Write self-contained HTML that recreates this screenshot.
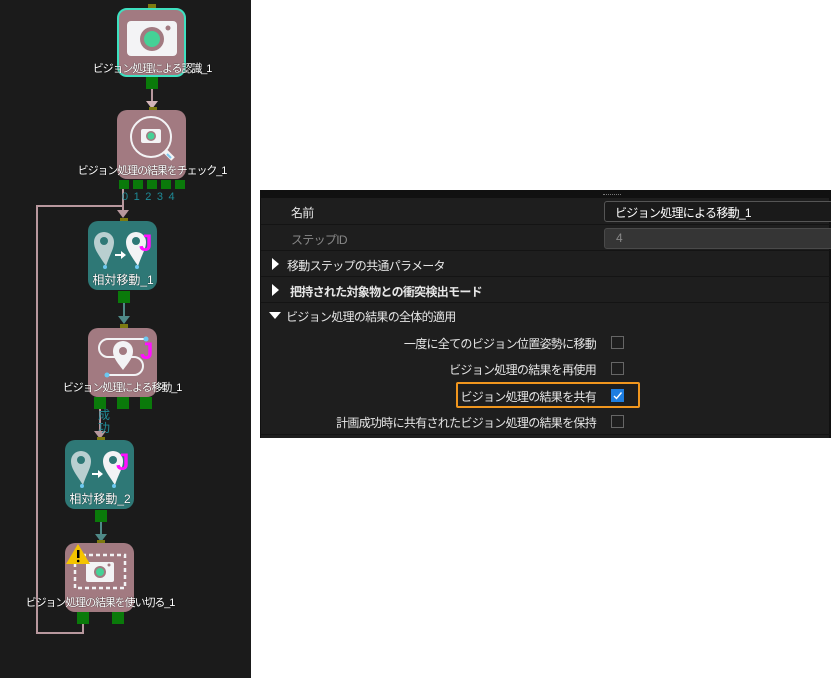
<!DOCTYPE html>
<html><head><meta charset="utf-8"><style>
*{margin:0;padding:0;box-sizing:border-box}
body{width:831px;height:678px;background:#fff;position:relative;overflow:hidden;font-family:"Liberation Sans","Noto Sans CJK JP",sans-serif}
.a{position:absolute}
#left{left:0;top:0;width:251px;height:678px;background:#1b1b1b}
.node{position:absolute;width:69px;height:69px;border-radius:10px}
.pk{background:#a27a81}.tl{background:#2e7876}
.lbl{position:absolute;white-space:nowrap;color:#fff;font-size:11px;text-align:center;transform:translateX(-50%);line-height:12px;text-shadow:0 0 1px #000;letter-spacing:-1.1px}
.port{position:absolute;width:12px;height:12px;background:#0a7a0a}
.in{position:absolute;width:8px;height:8px;background:#7d7a10}
.ln{position:absolute;background:#b8989e}
#panel{left:260px;top:190px;width:571px;height:248px;background:#1e1e1e;border-left:1px solid #111;border-right:2px solid #111}
.row{position:absolute;left:0;width:569px;border-bottom:1px solid #141414}
.t{position:absolute;color:#e6e6e6;font-size:12px;white-space:nowrap;letter-spacing:-0.7px}
.cb{position:absolute;left:350px;width:13px;height:13px;border:1px solid #666;background:#1e1e1e}
</style></head><body>
<div id="left" class="a">
<div class="ln" style="left:36px;top:205px;width:2px;height:429px"></div>
<div class="ln" style="left:36px;top:205px;width:88px;height:2px"></div>
<div class="ln" style="left:122px;top:189px;width:2px;height:18px"></div>
<div class="ln" style="left:36px;top:632px;width:48px;height:2px"></div>
<div class="ln" style="left:82px;top:622px;width:2px;height:12px"></div>
<div class="ln" style="left:151px;top:89px;width:2px;height:14px"></div>
<svg class="a" style="left:146px;top:101px" width="12" height="9"><path d="M0 0H12L6 8Z" fill="#d4b4b9"/></svg>
<div class="ln" style="left:122px;top:207px;width:2px;height:7px"></div>
<svg class="a" style="left:117px;top:210px" width="12" height="9"><path d="M0 0H12L6 8Z" fill="#b8989e"/></svg>
<div class="a" style="left:123px;top:303px;width:2px;height:14px;background:#4f8a88"></div>
<svg class="a" style="left:118px;top:316px" width="12" height="9"><path d="M0 0H12L6 8Z" fill="#4f8a88"/></svg>
<div class="ln" style="left:99px;top:409px;width:2px;height:25px"></div>
<svg class="a" style="left:94px;top:431px" width="12" height="9"><path d="M0 0H12L6 8Z" fill="#b8989e"/></svg>
<div class="a" style="left:100px;top:521px;width:2px;height:14px;background:#4f8a88"></div>
<svg class="a" style="left:95px;top:534px" width="12" height="9"><path d="M0 0H12L6 8Z" fill="#4f8a88"/></svg>

<div class="in" style="left:148px;top:4px"></div>
<div class="node pk" style="left:117px;top:8px;border:2px solid #3ee0c0"></div>
<svg class="a" style="left:127px;top:21px" width="50" height="36"><rect x="0" y="0" width="50" height="35" rx="4" fill="#f3f3f5"/><circle cx="25" cy="18" r="12" fill="#a27a81"/><circle cx="25" cy="18" r="8" fill="#45d196"/><circle cx="41" cy="7" r="2.5" fill="#a27a81"/></svg>
<div class="lbl" style="left:152px;top:63px">ビジョン処理による認識_1</div>
<div class="port" style="left:146px;top:77px"></div>
<div class="in" style="left:149px;top:107px"></div>
<div class="node pk" style="left:117px;top:110px"></div>
<svg class="a" style="left:128px;top:114px" width="52" height="50"><circle cx="23" cy="23" r="20" fill="none" stroke="#f3f3f5" stroke-width="2"/><rect x="13" y="15" width="20" height="14" rx="2" fill="#f3f3f5"/><circle cx="23" cy="22" r="5" fill="#a27a81"/><circle cx="23" cy="22" r="3.5" fill="#45d196"/><path d="M37 37L45 45" stroke="#f3f3f5" stroke-width="5"/><path d="M39 40L43 44" stroke="#7ec8ee" stroke-width="2"/></svg>
<div class="lbl" style="left:152px;top:165px">ビジョン処理の結果をチェック_1</div>
<div class="port" style="left:119px;top:180px;height:9px;width:10px"></div>
<div class="port" style="left:133px;top:180px;height:9px;width:10px"></div>
<div class="port" style="left:147px;top:180px;height:9px;width:10px"></div>
<div class="port" style="left:161px;top:180px;height:9px;width:10px"></div>
<div class="port" style="left:175px;top:180px;height:9px;width:10px"></div>
<div class="a" style="left:122px;top:191px;color:#1f8a96;font-size:11px;letter-spacing:5.5px">01234</div>
<div class="in" style="left:120px;top:218px"></div>
<div class="node tl" style="left:88px;top:221px"></div>
<svg class="a" style="left:94px;top:230px" width="62" height="40"><path d="M12 36C4 24 0 19 0 12A10 10 0 0 1 20 12C20 19 16 24 12 36Z" fill="#b9cfd0"/><circle cx="10" cy="11" r="4" fill="#2e7876"/><path d="M21 25H28" stroke="#fff" stroke-width="2"/><path d="M27 21L32 25L27 29Z" fill="#fff"/><path d="M44 36C36 24 32 19 32 12A10 10 0 0 1 52 12C52 19 48 24 44 36Z" fill="#f3f3f5"/><circle cx="42" cy="11" r="4" fill="#2e7876"/><text x="45" y="21" font-family="Liberation Sans" font-weight="bold" font-size="24" fill="#ff10ff">J</text><circle cx="11" cy="37" r="2" fill="#6cc8f0"/><circle cx="43" cy="37" r="2" fill="#6cc8f0"/></svg>
<div class="lbl" style="left:123px;top:274px;font-size:12px;letter-spacing:0">相対移動_1</div>
<div class="port" style="left:118px;top:291px"></div>
<div class="in" style="left:120px;top:324px"></div>
<div class="node pk" style="left:88px;top:328px"></div>
<svg class="a" style="left:96px;top:335px" width="62" height="45"><path d="M50 4H12A9 9 0 0 0 12 22H30M35 22H38A9 9 0 0 1 38 40H11" fill="none" stroke="#f3f3f5" stroke-width="2"/><path d="M27 35C20 26 17 22 17 16A10 10 0 0 1 37 16C37 22 34 26 27 35Z" fill="#f3f3f5"/><circle cx="27" cy="16" r="4" fill="#a27a81"/><circle cx="50" cy="4" r="2.5" fill="#6cc8f0"/><circle cx="11" cy="40" r="2.5" fill="#6cc8f0"/><text x="44" y="24" font-family="Liberation Sans" font-weight="bold" font-size="24" fill="#ff10ff">J</text></svg>
<div class="lbl" style="left:122px;top:382px">ビジョン処理による移動_1</div>
<div class="port" style="left:94px;top:397px"></div>
<div class="port" style="left:117px;top:397px"></div>
<div class="port" style="left:140px;top:397px"></div>
<div class="a" style="left:98px;top:409px;color:#1f8a96;font-size:12px;line-height:13px;width:14px">成<br>功</div>
<div class="in" style="left:97px;top:437px"></div>
<div class="node tl" style="left:65px;top:440px"></div>
<svg class="a" style="left:71px;top:449px" width="62" height="40"><path d="M12 36C4 24 0 19 0 12A10 10 0 0 1 20 12C20 19 16 24 12 36Z" fill="#b9cfd0"/><circle cx="10" cy="11" r="4" fill="#2e7876"/><path d="M21 25H28" stroke="#fff" stroke-width="2"/><path d="M27 21L32 25L27 29Z" fill="#fff"/><path d="M44 36C36 24 32 19 32 12A10 10 0 0 1 52 12C52 19 48 24 44 36Z" fill="#f3f3f5"/><circle cx="42" cy="11" r="4" fill="#2e7876"/><text x="45" y="21" font-family="Liberation Sans" font-weight="bold" font-size="24" fill="#ff10ff">J</text><circle cx="11" cy="37" r="2" fill="#6cc8f0"/><circle cx="43" cy="37" r="2" fill="#6cc8f0"/></svg>
<div class="lbl" style="left:100px;top:493px;font-size:12px;letter-spacing:0">相対移動_2</div>
<div class="port" style="left:95px;top:510px"></div>
<div class="in" style="left:97px;top:540px"></div>
<div class="node pk" style="left:65px;top:543px"></div>
<svg class="a" style="left:73px;top:553px" width="55" height="40"><rect x="2" y="2" width="50" height="33" fill="none" stroke="#f3f3f5" stroke-width="2.5" stroke-dasharray="4 3"/><rect x="13" y="9" width="28" height="20" rx="2" fill="#f3f3f5"/><circle cx="27" cy="19" r="6" fill="#a27a81"/><circle cx="27" cy="19" r="4" fill="#45d196"/><circle cx="36" cy="12" r="1.5" fill="#a27a81"/></svg>
<svg class="a" style="left:66px;top:543px" width="25" height="22"><path d="M12 1L24 21H0Z" fill="#f5c400"/><rect x="11" y="7" width="2.5" height="8" fill="#000"/><circle cx="12.2" cy="18" r="1.3" fill="#000"/></svg>
<div class="lbl" style="left:100px;top:597px">ビジョン処理の結果を使い切る_1</div>
<div class="port" style="left:77px;top:612px"></div>
<div class="port" style="left:112px;top:612px"></div>
</div>

<div id="panel" class="a">
<div class="a" style="left:0;top:0;width:569px;height:8px;background:#111"></div>
<div class="a" style="left:342px;top:4px;width:18px;height:1px;border-top:1px dotted #777"></div>
<div class="row" style="top:8px;height:27px"><div class="t" style="left:30px;top:6px">名前</div>
<div class="a" style="left:343px;top:3px;width:230px;height:21px;background:#1a1a1a;border:1px solid #555;border-radius:3px"></div>
<div class="t" style="left:354px;top:6px;color:#fff">ビジョン処理による移動_1</div></div>
<div class="row" style="top:35px;height:26px"><div class="t" style="left:30px;top:6px;color:#888">ステップID</div>
<div class="a" style="left:343px;top:3px;width:230px;height:21px;background:#353535;border:1px solid #4a4a4a;border-radius:3px"></div>
<div class="t" style="left:355px;top:6px;color:#888">4</div></div>
<div class="row" style="top:61px;height:26px"><svg class="a" style="left:11px;top:7px" width="8" height="12"><path d="M0 0L7 6L0 12Z" fill="#fff"/></svg><div class="t" style="left:26px;top:6px">移動ステップの共通パラメータ</div></div>
<div class="row" style="top:87px;height:26px"><svg class="a" style="left:11px;top:7px" width="8" height="12"><path d="M0 0L7 6L0 12Z" fill="#fff"/></svg><div class="t" style="left:29px;top:6px;font-weight:bold">把持された対象物との衝突検出モード</div></div>
<div class="row" style="top:113px;height:132px;border:none">
<svg class="a" style="left:8px;top:9px" width="12" height="8"><path d="M0 0H12L6 7Z" fill="#fff"/></svg><div class="t" style="left:25px;top:5px">ビジョン処理の結果の全体的適用</div>
<div class="t" style="right:234px;top:32px">一度に全てのビジョン位置姿勢に移動</div><div class="cb" style="top:33px"></div>
<div class="t" style="right:234px;top:58px">ビジョン処理の結果を再使用</div><div class="cb" style="top:59px"></div>
<div class="a" style="left:195px;top:79px;width:184px;height:26px;border:2px solid #f0961e;border-radius:2px"></div>
<div class="t" style="right:234px;top:85px">ビジョン処理の結果を共有</div>
<div class="cb" style="top:86px;background:#1e7ee0;border-color:#1e7ee0"><svg width="11" height="11" style="position:absolute;left:0;top:0"><path d="M2 6L4.5 8.5L9.5 2.5" fill="none" stroke="#fff" stroke-width="1.4"/></svg></div>
<div class="t" style="right:234px;top:111px">計画成功時に共有されたビジョン処理の結果を保持</div><div class="cb" style="top:112px"></div>
</div>
<div class="a" style="left:0;top:244px;width:569px;height:1px;background:#141414"></div>
</div>
</body></html>
